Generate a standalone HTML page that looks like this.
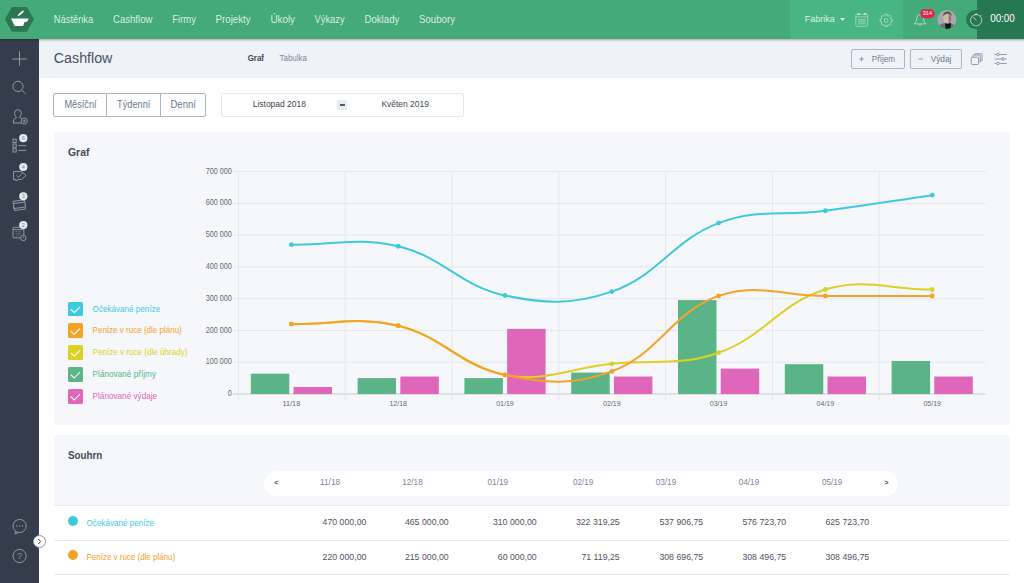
<!DOCTYPE html>
<html><head><meta charset="utf-8">
<style>
*{margin:0;padding:0;box-sizing:border-box}
html,body{width:1024px;height:583px;overflow:hidden;background:#fff;font-family:"Liberation Sans",sans-serif}
.a{position:absolute;white-space:nowrap;line-height:1}
#top{position:absolute;left:0;top:0;width:1024px;height:39px;background:#43aa78}
#topshadow{position:absolute;z-index:5;left:0;top:39px;width:1024px;height:3px;background:linear-gradient(rgba(0,0,0,.27),rgba(0,0,0,.13) 45%,rgba(0,0,0,0))}
.nav{position:absolute;top:14px;font-size:9.6px;color:rgba(255,255,255,.82)}
#side{position:absolute;left:0;top:39px;width:39px;height:544px;background:#353d4c}
#hdr{position:absolute;left:39px;top:39px;width:985px;height:39px;background:#eff2f7;border-bottom:1px solid #e9ecf2}
.btn{position:absolute;border:1px solid #aab5c6;border-radius:2px;height:20px;top:49px}
.panel{position:absolute;background:#f6f7fb}
.ax{fill:#66696e;font-family:"Liberation Sans",sans-serif}
.leg{position:absolute;left:92.6px;font-size:8.1px}
.cb{position:absolute;left:68px;width:14.6px;height:14.6px;border-radius:1.6px}
.th{position:absolute;top:479px;font-size:7.9px;color:#7b8699}
.td{position:absolute;font-size:8.65px;color:#444a55;text-align:right;width:60px}
</style></head><body>
<div id="top"></div>
<div class="a" style="left:790px;top:0;width:113px;height:39px;background:#47b683"></div>
<div class="a" style="left:977px;top:0;width:47px;height:39px;background:#267852"></div>
<div class="a" style="left:966.3px;top:9.5px;width:19.4px;height:19.4px;border-radius:50%;background:#267852"></div>
<div id="topshadow"></div>
<!-- logo -->
<svg class="a" style="left:0;top:0" width="39" height="39" viewBox="0 0 39 39">
<polygon points="6.1,19.3 12.4,7.9 26.2,7.9 32.8,19.3 26.2,30.7 12.4,30.7" fill="#2b7753" stroke="#2b7753" stroke-width="2" stroke-linejoin="round"/>
<path d="M11 18.4 H28.7 L27.9 20.6 Q27.4 21.8 26.1 21.9 L24.5 22.1 L23.3 25.4 Q23 26.1 22.2 26.1 H15.4 Q14.7 26.1 14.4 25.4 Z" fill="#fff"/>
<ellipse cx="20.8" cy="13.3" rx="3.9" ry="0.95" transform="rotate(-42 20.8 13.3)" fill="#fff"/>
</svg>
<svg class="a" style="left:780px;top:0" width="244" height="39" viewBox="780 0 244 39">
<path d="M840 18 L845 18 L842.5 21Z" fill="rgba(255,255,255,.85)"/>
<!-- calendar -->
<g fill="none" stroke="rgba(255,255,255,.5)" stroke-width="0.85">
<rect x="855.8" y="14.2" width="11.9" height="12.2" rx="1.3"/>
<line x1="855.8" y1="16.9" x2="867.7" y2="16.9"/>
</g>
<g fill="rgba(255,255,255,.8)"><circle cx="858.7" cy="14" r="0.9"/><circle cx="865" cy="14" r="0.9"/></g>
<g fill="rgba(255,255,255,.45)">
<rect x="858" y="19.1" width="7.6" height="1.1"/><rect x="858" y="21.2" width="7.6" height="1.1"/><rect x="858" y="23.3" width="7.6" height="1.1"/>
</g>
<!-- gear -->
<g fill="none" stroke="rgba(255,255,255,.55)" stroke-width="0.85" stroke-linejoin="round">
<path d="M885.21 14.18 L887.19 14.18 L887.37 15.54 L888.81 16.14 L889.90 15.30 L891.30 16.70 L890.46 17.79 L891.06 19.23 L892.42 19.41 L892.42 21.39 L891.06 21.57 L890.46 23.01 L891.30 24.10 L889.90 25.50 L888.81 24.66 L887.37 25.26 L887.19 26.62 L885.21 26.62 L885.03 25.26 L883.59 24.66 L882.50 25.50 L881.10 24.10 L881.94 23.01 L881.34 21.57 L879.98 21.39 L879.98 19.41 L881.34 19.23 L881.94 17.79 L881.10 16.70 L882.50 15.30 L883.59 16.14 L885.03 15.54Z"/>
<circle cx="886.2" cy="20.4" r="1.9"/>
</g>
<!-- bell -->
<g fill="none" stroke="rgba(255,255,255,.62)" stroke-width="0.85" stroke-linejoin="round">
<path d="M914.3 23.9 Q916.6 22.2 916.6 18.8 Q916.6 14.9 920.1 14.4 Q923.6 14.9 923.6 18.8 Q923.6 22.2 925.9 23.9Z"/>
<path d="M918.6 24 Q920.1 27 921.6 24"/>
</g>
<rect x="920.3" y="9.3" width="14.3" height="9" rx="4.5" fill="#e3234a"/>
<text x="927.4" y="15.1" text-anchor="middle" font-size="5.6" textLength="9.2" lengthAdjust="spacingAndGlyphs" fill="#fff" font-family="Liberation Sans">314</text>
<!-- avatar -->
<clipPath id="avc"><circle cx="946.8" cy="19.55" r="9.55"/></clipPath>
<g clip-path="url(#avc)">
<rect x="936" y="9" width="22" height="22" fill="#a9a8ad"/>
<path d="M937 31 Q938 24.5 943.5 23.2 L950.5 23.2 Q956 24.5 957 31Z" fill="#6a6f7a"/>
<path d="M945 23.3 L951 23.3 L950.5 31 L945.8 31Z" fill="#141416"/>
<ellipse cx="947.4" cy="18.2" rx="4.1" ry="5.4" fill="#cfb9a8"/>
<path d="M948.6 14.5 Q951.5 15.5 951.4 19 Q951 22.8 948.6 23.5Z" fill="#8e7b6e"/>
<path d="M943.2 16.5 Q942.8 11.6 947.3 11.4 Q951.8 11.5 951.6 16.2 Q950 13.6 947.4 13.7 Q944.6 13.8 943.2 16.5Z" fill="#5e5650"/>
</g>
<!-- stopwatch -->
<g fill="none" stroke="rgba(255,255,255,.72)" stroke-width="0.85">
<circle cx="976.2" cy="20.2" r="5.6"/>
<line x1="976.4" y1="20.6" x2="973.4" y2="17.1"/>
<line x1="980.3" y1="16.2" x2="981.2" y2="15.1"/>
</g>
<ellipse cx="976.2" cy="14.3" rx="1.3" ry="0.8" fill="rgba(255,255,255,.72)"/>
</svg>

<div id="side"></div>
<svg class="a" style="left:0;top:39px" width="39" height="544" viewBox="0 39 39 544">
<g fill="none" stroke="#959ca7" stroke-width="0.95">
<line x1="12.3" y1="59" x2="26.8" y2="59"/><line x1="19.5" y1="51.1" x2="19.5" y2="65.9"/>
<circle cx="18" cy="86.4" r="5.1"/><line x1="21.7" y1="90.1" x2="25.8" y2="94.1"/>
<path d="M13 123 Q13 118.5 16.5 117.6 Q14.5 116 14.5 113.2 Q14.6 109.7 17.9 109.6 Q21.2 109.7 21.3 113.2 Q21.3 116 19.3 117.6 Q20.6 118 21.5 118.6"/>
<path d="M13 123 H21.5"/>
<circle cx="24.2" cy="121" r="3.1"/><line x1="22.6" y1="121" x2="25.8" y2="121"/><line x1="24.2" y1="119.4" x2="24.2" y2="122.6"/>
<rect x="13" y="139.2" width="3.2" height="3.2"/><rect x="13" y="144" width="3.2" height="3.2"/><rect x="13" y="148.8" width="3.2" height="3.2"/>
<line x1="18.5" y1="145.6" x2="26.3" y2="145.6"/><line x1="18.5" y1="150.4" x2="26.3" y2="150.4"/>
<path d="M13.5 171.5 H21.5 L26 175.5 L21.5 179.5 H18 L16 181 V179.5 H13.5Z"/><path d="M16.5 175.3 L18.5 177.3 L22.5 172.8"/>
<path d="M13 201.3 L24.6 199.8 L25.6 207 L14 208.5Z"/><path d="M13.3 203.6 L24.9 202.1"/><path d="M13.6 206.5 L14.5 210.5 L25.5 209 L25.4 207.6"/>
<rect x="13" y="227.3" width="10.8" height="10.5" rx="0.6"/><line x1="13" y1="229.6" x2="23.8" y2="229.6"/>
<g stroke="#5d6472" stroke-width="0.9"><line x1="15.3" y1="231.6" x2="21.5" y2="231.6"/><line x1="15.3" y1="233.4" x2="21.5" y2="233.4"/><line x1="15.3" y1="235.2" x2="20" y2="235.2"/></g>
<circle cx="23.3" cy="238" r="2.7" fill="#353d4c"/><path d="M23.3 236.7 V238.2"/>
<circle cx="19.6" cy="526" r="6.6"/><path d="M16 531.5 L14.8 534 L18.5 532.5"/>
<circle cx="19.6" cy="556" r="6.6"/>
</g>
<g fill="#e8eaee">
<circle cx="23.3" cy="138.2" r="4.1"/><circle cx="23.3" cy="167" r="4.1"/><circle cx="23.3" cy="196.3" r="4.1"/><circle cx="23.3" cy="225" r="4.1"/>
</g>
<g font-family="Liberation Sans" font-size="5.6" fill="#7b8291" text-anchor="middle">
<text x="23.3" y="140.2">6</text><text x="23.3" y="169">4</text><text x="23.3" y="198.3">3</text><text x="23.3" y="227">2</text>
</g>
<g fill="#8f96a3"><circle cx="16.8" cy="526" r="0.7"/><circle cx="19.6" cy="526" r="0.7"/><circle cx="22.4" cy="526" r="0.7"/></g>
<text x="19.6" y="559.3" font-family="Liberation Sans" font-size="9" fill="#8f96a3" text-anchor="middle">?</text>
</svg>
<div class="a" style="left:33px;top:535px;width:13px;height:13px;border-radius:50%;background:#fff;border:1px solid #8f96a3"></div>
<svg class="a" style="left:33px;top:535px" width="13" height="13" viewBox="0 0 13 13"><path d="M5.3 4 L7.6 6.5 L5.3 9" fill="none" stroke="#353d4c" stroke-width="1"/></svg>

<div id="hdr"></div>
<div class="btn" style="left:851px;width:54px"></div>
<div class="btn" style="left:910px;width:52px"></div>
<svg class="a" style="left:840px;top:40px" width="184" height="38" viewBox="840 40 184 38">
<g fill="none" stroke="#8391a8" stroke-width="0.9">
<line x1="859.3" y1="59" x2="863.9" y2="59"/><line x1="861.6" y1="56.7" x2="861.6" y2="61.3"/>
<line x1="918.3" y1="59" x2="922.9" y2="59"/>
<rect x="971.3" y="57.2" width="7.2" height="7.3" rx="1"/>
<path d="M973 57.2 V55.6 Q973 55 973.6 55 H979.6 Q980.2 55 980.2 55.6 V61.6 Q980.2 62.2 979.6 62.2 H978.5"/>
<path d="M974.8 55 V54.3 Q974.8 53.8 975.3 53.8 H981.4 Q982 53.8 982 54.3 V60.5 Q982 61 981.4 61 H980.2"/>
<line x1="994.5" y1="54.5" x2="1006.8" y2="54.5"/><line x1="994.5" y1="59" x2="1006.8" y2="59"/><line x1="994.5" y1="63.5" x2="1006.8" y2="63.5"/>
</g>
<g fill="#eff2f7" stroke="#8391a8" stroke-width="0.9">
<circle cx="998" cy="54.5" r="1.3"/><circle cx="1003" cy="59" r="1.3"/><circle cx="998" cy="63.5" r="1.3"/>
</g>
</svg>

<!-- segmented -->
<div class="a" style="left:53.3px;top:92.8px;width:153px;height:24px;border:1px solid #aab5c6;border-radius:2px"></div>
<div class="a" style="left:106.1px;top:92.8px;width:1px;height:24px;background:#aab5c6"></div>
<div class="a" style="left:159.6px;top:92.8px;width:1px;height:24px;background:#aab5c6"></div>
<!-- date range -->
<div class="a" style="left:220.7px;top:93px;width:243px;height:24px;border:1px solid #e4e8ef;border-radius:2px"></div>
<div class="a" style="left:337px;top:99.7px;width:10px;height:10.2px;background:#e8ecf3;border-radius:1px"></div>
<div class="a" style="left:339.5px;top:104.3px;width:5px;height:1.4px;background:#4f5a6c"></div>

<!-- graf panel -->
<div class="panel" style="left:53.7px;top:131.6px;width:956.3px;height:293px"></div>
<div class="cb" style="top:301.7px;background:#3fcadc"></div>
<div class="cb" style="top:323.4px;background:#f5a229"></div>
<div class="cb" style="top:345.2px;background:#ddd024"></div>
<div class="cb" style="top:367px;background:#5ab488"></div>
<div class="cb" style="top:389px;background:#e066b9"></div>
<svg class="a" style="left:68px;top:301px" width="15" height="104" viewBox="0 0 15 104">
<g fill="none" stroke="#fff" stroke-width="1.05" stroke-linecap="round" stroke-linejoin="round"><path d="M3 8.6 L6.3 11.7 L11.8 6.0"/><path d="M3 30.3 L6.3 33.4 L11.8 27.7"/><path d="M3 52.1 L6.3 55.2 L11.8 49.5"/><path d="M3 73.9 L6.3 77.0 L11.8 71.3"/><path d="M3 95.9 L6.3 99.0 L11.8 93.3"/></g></svg>
<svg class="a" style="left:0;top:0" width="1024" height="583" viewBox="0 0 1024 583">
<line x1="232.5" y1="394.00" x2="985.6" y2="394.00" stroke="#d6d8dc" stroke-width="1.3"/>
<text x="227.80" y="396.10" font-size="8.2" textLength="4.00" lengthAdjust="spacingAndGlyphs" class="ax">0</text>
<line x1="232.5" y1="362.23" x2="985.6" y2="362.23" stroke="#e4e6ea" stroke-width="1"/>
<text x="205.78" y="364.33" font-size="8.2" textLength="26.02" lengthAdjust="spacingAndGlyphs" class="ax">100 000</text>
<line x1="232.5" y1="330.46" x2="985.6" y2="330.46" stroke="#e4e6ea" stroke-width="1"/>
<text x="205.78" y="332.56" font-size="8.2" textLength="26.02" lengthAdjust="spacingAndGlyphs" class="ax">200 000</text>
<line x1="232.5" y1="298.69" x2="985.6" y2="298.69" stroke="#e4e6ea" stroke-width="1"/>
<text x="205.78" y="300.79" font-size="8.2" textLength="26.02" lengthAdjust="spacingAndGlyphs" class="ax">300 000</text>
<line x1="232.5" y1="266.92" x2="985.6" y2="266.92" stroke="#e4e6ea" stroke-width="1"/>
<text x="205.78" y="269.02" font-size="8.2" textLength="26.02" lengthAdjust="spacingAndGlyphs" class="ax">400 000</text>
<line x1="232.5" y1="235.15" x2="985.6" y2="235.15" stroke="#e4e6ea" stroke-width="1"/>
<text x="205.78" y="237.25" font-size="8.2" textLength="26.02" lengthAdjust="spacingAndGlyphs" class="ax">500 000</text>
<line x1="232.5" y1="203.38" x2="985.6" y2="203.38" stroke="#e4e6ea" stroke-width="1"/>
<text x="205.78" y="205.48" font-size="8.2" textLength="26.02" lengthAdjust="spacingAndGlyphs" class="ax">600 000</text>
<line x1="232.5" y1="171.61" x2="985.6" y2="171.61" stroke="#e4e6ea" stroke-width="1"/>
<text x="205.78" y="173.71" font-size="8.2" textLength="26.02" lengthAdjust="spacingAndGlyphs" class="ax">700 000</text>
<line x1="238.45" y1="171.6" x2="238.45" y2="400" stroke="#e4e6ea" stroke-width="1"/>
<line x1="345.25" y1="171.6" x2="345.25" y2="400" stroke="#e4e6ea" stroke-width="1"/>
<line x1="452.05" y1="171.6" x2="452.05" y2="400" stroke="#e4e6ea" stroke-width="1"/>
<line x1="558.85" y1="171.6" x2="558.85" y2="400" stroke="#e4e6ea" stroke-width="1"/>
<line x1="665.65" y1="171.6" x2="665.65" y2="400" stroke="#e4e6ea" stroke-width="1"/>
<line x1="772.45" y1="171.6" x2="772.45" y2="400" stroke="#e4e6ea" stroke-width="1"/>
<line x1="879.25" y1="171.6" x2="879.25" y2="400" stroke="#e4e6ea" stroke-width="1"/>
<text x="282.60" y="405.5" font-size="7.6" textLength="17.6" lengthAdjust="spacingAndGlyphs" class="ax">11/18</text>
<text x="389.40" y="405.5" font-size="7.6" textLength="17.6" lengthAdjust="spacingAndGlyphs" class="ax">12/18</text>
<text x="496.20" y="405.5" font-size="7.6" textLength="17.6" lengthAdjust="spacingAndGlyphs" class="ax">01/19</text>
<text x="603.00" y="405.5" font-size="7.6" textLength="17.6" lengthAdjust="spacingAndGlyphs" class="ax">02/19</text>
<text x="709.80" y="405.5" font-size="7.6" textLength="17.6" lengthAdjust="spacingAndGlyphs" class="ax">03/19</text>
<text x="816.60" y="405.5" font-size="7.6" textLength="17.6" lengthAdjust="spacingAndGlyphs" class="ax">04/19</text>
<text x="923.40" y="405.5" font-size="7.6" textLength="17.6" lengthAdjust="spacingAndGlyphs" class="ax">05/19</text>
<rect x="250.82" y="373.67" width="38.45" height="20.33" fill="#5ab488"/>
<rect x="293.54" y="387.01" width="38.45" height="6.99" fill="#e066b9"/>
<rect x="357.62" y="378.12" width="38.45" height="15.88" fill="#5ab488"/>
<rect x="400.34" y="376.53" width="38.45" height="17.47" fill="#e066b9"/>
<rect x="464.42" y="378.12" width="38.45" height="15.88" fill="#5ab488"/>
<rect x="507.14" y="328.87" width="38.45" height="65.13" fill="#e066b9"/>
<rect x="571.22" y="372.61" width="38.45" height="21.39" fill="#5ab488"/>
<rect x="613.94" y="376.53" width="38.45" height="17.47" fill="#e066b9"/>
<rect x="678.02" y="300.09" width="38.45" height="93.91" fill="#5ab488"/>
<rect x="720.74" y="368.58" width="38.45" height="25.42" fill="#e066b9"/>
<rect x="784.82" y="364.19" width="38.45" height="29.81" fill="#5ab488"/>
<rect x="827.54" y="376.53" width="38.45" height="17.47" fill="#e066b9"/>
<rect x="891.62" y="360.96" width="38.45" height="33.04" fill="#5ab488"/>
<rect x="934.34" y="376.53" width="38.45" height="17.47" fill="#e066b9"/>
<path d="M291.40 324.11 C334.12 324.74 357.53 316.02 398.20 325.69 C442.97 336.35 460.34 366.97 505.00 374.94 C545.78 382.22 569.08 368.27 611.80 363.82 C654.52 359.37 678.97 366.49 718.60 352.70 C764.41 336.76 779.48 303.07 825.40 289.48 C864.92 277.78 889.48 289.48 932.20 289.48" fill="none" stroke="#ddd024" stroke-width="2"/><circle cx="291.40" cy="324.11" r="2.4" fill="#ddd024"/><circle cx="398.20" cy="325.69" r="2.4" fill="#ddd024"/><circle cx="505.00" cy="374.94" r="2.4" fill="#ddd024"/><circle cx="611.80" cy="363.82" r="2.4" fill="#ddd024"/><circle cx="718.60" cy="352.70" r="2.4" fill="#ddd024"/><circle cx="825.40" cy="289.48" r="2.4" fill="#ddd024"/><circle cx="932.20" cy="289.48" r="2.4" fill="#ddd024"/>
<path d="M291.40 324.11 C334.12 324.74 357.53 316.02 398.20 325.69 C442.97 336.35 460.23 365.36 505.00 374.94 C545.67 383.64 573.38 385.62 611.80 371.41 C658.82 354.01 671.57 312.53 718.60 295.93 C757.01 282.37 782.68 295.98 825.40 295.99 C868.12 296.00 889.48 295.99 932.20 295.99" fill="none" stroke="#f5a229" stroke-width="2"/><circle cx="291.40" cy="324.11" r="2.4" fill="#f5a229"/><circle cx="398.20" cy="325.69" r="2.4" fill="#f5a229"/><circle cx="505.00" cy="374.94" r="2.4" fill="#f5a229"/><circle cx="611.80" cy="371.41" r="2.4" fill="#f5a229"/><circle cx="718.60" cy="295.93" r="2.4" fill="#f5a229"/><circle cx="825.40" cy="295.99" r="2.4" fill="#f5a229"/><circle cx="932.20" cy="295.99" r="2.4" fill="#f5a229"/>
<path d="M291.40 244.68 C334.12 245.32 357.53 236.59 398.20 246.27 C442.97 256.92 460.24 286.01 505.00 295.51 C545.68 304.15 572.74 304.84 611.80 291.60 C658.18 275.88 672.35 240.61 718.60 223.11 C757.79 208.28 782.76 216.34 825.40 210.77 C868.20 205.18 889.48 201.43 932.20 195.21" fill="none" stroke="#3fcadc" stroke-width="2"/><circle cx="291.40" cy="244.68" r="2.4" fill="#3fcadc"/><circle cx="398.20" cy="246.27" r="2.4" fill="#3fcadc"/><circle cx="505.00" cy="295.51" r="2.4" fill="#3fcadc"/><circle cx="611.80" cy="291.60" r="2.4" fill="#3fcadc"/><circle cx="718.60" cy="223.11" r="2.4" fill="#3fcadc"/><circle cx="825.40" cy="210.77" r="2.4" fill="#3fcadc"/><circle cx="932.20" cy="195.21" r="2.4" fill="#3fcadc"/>
</svg>

<!-- souhrn -->
<div class="panel" style="left:53.5px;top:435px;width:956.5px;height:70.5px;border-bottom:1px solid #e6e9ee"></div>
<div class="a" style="left:263.8px;top:471px;width:634px;height:25px;border-radius:12.5px;background:#fff"></div>
<div class="a" style="left:53.5px;top:539.5px;width:956.5px;height:1px;background:#e6e9ee"></div>
<div class="a" style="left:53.5px;top:573.7px;width:956.5px;height:1px;background:#e6e9ee"></div>
<div class="a" style="left:67.9px;top:516px;width:10px;height:10px;border-radius:50%;background:#3fcadc"></div>
<div class="a" style="left:67.9px;top:550.4px;width:10px;height:10px;border-radius:50%;background:#f5a229"></div>
<svg class="a" style="left:0;top:0" width="1024" height="583" viewBox="0 0 1024 583" font-family="Liberation Sans">
<text x="53.80" y="22.60" font-size="10.73" textLength="39.40" lengthAdjust="spacingAndGlyphs" fill="rgba(255,255,255,.82)">Nástěnka</text>
<text x="113.00" y="22.60" font-size="11.02" textLength="39.40" lengthAdjust="spacingAndGlyphs" fill="rgba(255,255,255,.82)">Cashflow</text>
<text x="172.30" y="22.60" font-size="10.91" textLength="23.70" lengthAdjust="spacingAndGlyphs" fill="rgba(255,255,255,.82)">Firmy</text>
<text x="215.60" y="22.60" font-size="11.14" textLength="35.00" lengthAdjust="spacingAndGlyphs" fill="rgba(255,255,255,.82)">Projekty</text>
<text x="270.40" y="22.60" font-size="11.31" textLength="24.60" lengthAdjust="spacingAndGlyphs" fill="rgba(255,255,255,.82)">Úkoly</text>
<text x="314.60" y="22.60" font-size="10.70" textLength="30.00" lengthAdjust="spacingAndGlyphs" fill="rgba(255,255,255,.82)">Výkazy</text>
<text x="364.40" y="22.60" font-size="11.14" textLength="35.00" lengthAdjust="spacingAndGlyphs" fill="rgba(255,255,255,.82)">Doklady</text>
<text x="419.00" y="22.60" font-size="11.12" textLength="36.00" lengthAdjust="spacingAndGlyphs" fill="rgba(255,255,255,.82)">Soubory</text>
<text x="804.80" y="22.30" font-size="9.72" textLength="30.00" lengthAdjust="spacingAndGlyphs" fill="rgba(255,255,255,.82)">Fabrika</text>
<text x="990.20" y="22.00" font-size="11.60" textLength="24.60" lengthAdjust="spacingAndGlyphs" fill="#fff">00:00</text>
<text x="53.80" y="63.00" font-size="14.25" textLength="58.60" lengthAdjust="spacingAndGlyphs" fill="#4a5161">Cashflow</text>
<text x="247.70" y="61.00" font-size="8.32" textLength="16.30" lengthAdjust="spacingAndGlyphs" fill="#3d4452" font-weight="bold">Graf</text>
<text x="279.40" y="61.00" font-size="9.24" textLength="27.70" lengthAdjust="spacingAndGlyphs" fill="#7d8aa1">Tabulka</text>
<text x="871.80" y="61.60" font-size="9.48" textLength="23.20" lengthAdjust="spacingAndGlyphs" fill="#6e7b91">Příjem</text>
<text x="930.70" y="61.60" font-size="9.76" textLength="20.70" lengthAdjust="spacingAndGlyphs" fill="#6e7b91">Výdaj</text>
<text x="64.40" y="107.90" font-size="10.58" textLength="32.20" lengthAdjust="spacingAndGlyphs" fill="#6a778d">Měsíční</text>
<text x="117.10" y="107.90" font-size="10.57" textLength="33.20" lengthAdjust="spacingAndGlyphs" fill="#6a778d">Týdenní</text>
<text x="170.50" y="107.90" font-size="10.95" textLength="25.40" lengthAdjust="spacingAndGlyphs" fill="#6a778d">Denní</text>
<text x="252.70" y="107.30" font-size="9.76" textLength="53.30" lengthAdjust="spacingAndGlyphs" fill="#414754">Listopad 2018</text>
<text x="381.40" y="107.30" font-size="9.73" textLength="47.50" lengthAdjust="spacingAndGlyphs" fill="#414754">Květen 2019</text>
<text x="68.00" y="155.50" font-size="10.72" textLength="21.40" lengthAdjust="spacingAndGlyphs" fill="#444a56" font-weight="bold">Graf</text>
<text x="92.60" y="311.60" font-size="9.08" textLength="67.60" lengthAdjust="spacingAndGlyphs" fill="#3fcadc">Očekávané peníze</text>
<text x="92.60" y="333.40" font-size="8.99" textLength="89.20" lengthAdjust="spacingAndGlyphs" fill="#f5a229">Peníze v ruce (dle plánu)</text>
<text x="92.60" y="355.20" font-size="9.05" textLength="94.80" lengthAdjust="spacingAndGlyphs" fill="#ddd024">Peníze v ruce (dle úhrady)</text>
<text x="92.60" y="377.00" font-size="9.19" textLength="63.40" lengthAdjust="spacingAndGlyphs" fill="#5ab488">Plánované příjmy</text>
<text x="92.60" y="398.80" font-size="9.15" textLength="64.50" lengthAdjust="spacingAndGlyphs" fill="#e066b9">Plánované výdaje</text>
<text x="68.00" y="459.30" font-size="11.00" textLength="34.30" lengthAdjust="spacingAndGlyphs" fill="#474c58" font-weight="bold">Souhrn</text>
<text x="319.90" y="485.30" font-size="8.40" textLength="20.40" lengthAdjust="spacingAndGlyphs" fill="#7b8699">11/18</text>
<text x="402.30" y="485.30" font-size="8.15" textLength="20.40" lengthAdjust="spacingAndGlyphs" fill="#7b8699">12/18</text>
<text x="487.60" y="485.30" font-size="8.15" textLength="20.40" lengthAdjust="spacingAndGlyphs" fill="#7b8699">01/19</text>
<text x="572.90" y="485.30" font-size="8.15" textLength="20.40" lengthAdjust="spacingAndGlyphs" fill="#7b8699">02/19</text>
<text x="655.80" y="485.30" font-size="8.15" textLength="20.40" lengthAdjust="spacingAndGlyphs" fill="#7b8699">03/19</text>
<text x="738.80" y="485.30" font-size="8.15" textLength="20.40" lengthAdjust="spacingAndGlyphs" fill="#7b8699">04/19</text>
<text x="821.90" y="485.30" font-size="8.15" textLength="20.40" lengthAdjust="spacingAndGlyphs" fill="#7b8699">05/19</text>
<text x="274.30" y="485.00" font-size="7.20" textLength="4.30" lengthAdjust="spacingAndGlyphs" fill="#5a606b" font-weight="bold">&lt;</text>
<text x="884.40" y="485.00" font-size="7.80" textLength="4.00" lengthAdjust="spacingAndGlyphs" fill="#4d5460" font-weight="bold">&gt;</text>
<text x="86.50" y="525.50" font-size="9.08" textLength="67.60" lengthAdjust="spacingAndGlyphs" fill="#3fcadc">Očekávané peníze</text>
<text x="86.50" y="560.10" font-size="8.94" textLength="88.70" lengthAdjust="spacingAndGlyphs" fill="#f5a229">Peníze v ruce (dle plánu)</text>
<text x="322.60" y="524.80" font-size="9.63" textLength="43.80" lengthAdjust="spacingAndGlyphs" fill="#4f555f">470 000,00</text>
<text x="322.60" y="559.60" font-size="9.63" textLength="43.80" lengthAdjust="spacingAndGlyphs" fill="#4f555f">220 000,00</text>
<text x="404.90" y="524.80" font-size="9.63" textLength="43.80" lengthAdjust="spacingAndGlyphs" fill="#4f555f">465 000,00</text>
<text x="404.90" y="559.60" font-size="9.63" textLength="43.80" lengthAdjust="spacingAndGlyphs" fill="#4f555f">215 000,00</text>
<text x="492.90" y="524.80" font-size="9.63" textLength="43.80" lengthAdjust="spacingAndGlyphs" fill="#4f555f">310 000,00</text>
<text x="497.77" y="559.60" font-size="9.63" textLength="38.93" lengthAdjust="spacingAndGlyphs" fill="#4f555f">60 000,00</text>
<text x="575.90" y="524.80" font-size="9.63" textLength="43.80" lengthAdjust="spacingAndGlyphs" fill="#4f555f">322 319,25</text>
<text x="581.42" y="559.60" font-size="9.63" textLength="38.28" lengthAdjust="spacingAndGlyphs" fill="#4f555f">71 119,25</text>
<text x="659.40" y="524.80" font-size="9.63" textLength="43.80" lengthAdjust="spacingAndGlyphs" fill="#4f555f">537 906,75</text>
<text x="659.40" y="559.60" font-size="9.63" textLength="43.80" lengthAdjust="spacingAndGlyphs" fill="#4f555f">308 696,75</text>
<text x="742.40" y="524.80" font-size="9.63" textLength="43.80" lengthAdjust="spacingAndGlyphs" fill="#4f555f">576 723,70</text>
<text x="742.40" y="559.60" font-size="9.63" textLength="43.80" lengthAdjust="spacingAndGlyphs" fill="#4f555f">308 496,75</text>
<text x="825.40" y="524.80" font-size="9.63" textLength="43.80" lengthAdjust="spacingAndGlyphs" fill="#4f555f">625 723,70</text>
<text x="825.40" y="559.60" font-size="9.63" textLength="43.80" lengthAdjust="spacingAndGlyphs" fill="#4f555f">308 496,75</text>
</svg>
</body></html>
